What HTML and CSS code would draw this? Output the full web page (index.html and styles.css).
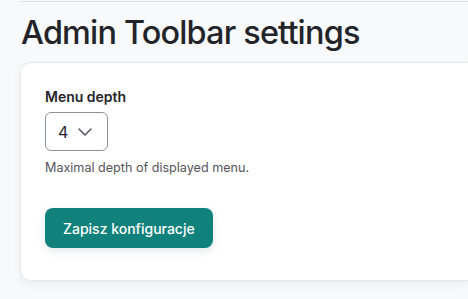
FILE: index.html
```html
<!DOCTYPE html>
<html lang="en">
<head>
<meta charset="utf-8">
<title>Admin Toolbar settings</title>
<link rel="stylesheet" href="styles.css">
</head>
<body>
<div class="page">
  <div class="rule"></div>
  <h1 class="title">Admin Toolbar settings</h1>
  <form class="card">
    <div class="field">
      <label class="label" for="depth">Menu depth</label>
      <div class="select">
        <span class="select-value">4</span>
        <svg class="chev" width="14" height="8" viewBox="0 0 14 8"><path d="M1 1l6 6 6-6" fill="none" stroke="#545560" stroke-width="1.5" stroke-linecap="round" stroke-linejoin="round"/></svg>
      </div>
      <div class="desc">Maximal depth of displayed menu.</div>
    </div>
    <div class="actions">
      <button type="button" class="btn">Zapisz konfiguracje</button>
    </div>
  </form>
</div>
</body>
</html>
```

FILE: styles.css
```css
html, body {
  margin: 0;
  padding: 0;
}
body {
  background: #f7f9fa;
  font-family: Inter, "Noto Sans", sans-serif;
  color: #232429;
  width: 468px;
  height: 299px;
  overflow: hidden;
}
.page {
  padding-left: 20px;
}
.rule {
  height: 1px;
  margin-top: 1px;
  background: #dedfe4;
}
.title {
  margin: 10px 0 0 0;
  padding-left: 1px;
  font-size: 32.4px;
  font-weight: 500;
  letter-spacing: -0.025em;
  line-height: 42px;
  color: #232429;
}
.card {
  margin-top: 8px;
  height: 219px;
  box-sizing: border-box;
  background: #fff;
  border: 1px solid #e6e7ea;
  border-right: none;
  border-radius: 10px 0 0 10px;
  box-shadow: 0 4px 10px rgba(0, 0, 0, 0.05);
  padding: 24px 24px;
}
.label {
  display: block;
  font-size: 14px;
  font-weight: 600;
  line-height: 20px;
  color: #232429;
}
.select {
  margin-top: 5px;
  width: 63px;
  height: 39px;
  box-sizing: border-box;
  border: 1px solid #8e929c;
  border-radius: 6px;
  display: flex;
  align-items: center;
  padding-left: 12px;
  gap: 10px;
}
.select-value {
  font-size: 16px;
  line-height: 20px;
  color: #232429;
}
.chev {
  display: block;
}
.desc {
  margin-top: 9px;
  font-size: 12.6px;
  line-height: 16px;
  color: #55565b;
}
.actions {
  margin-top: 32px;
}
.btn {
  height: 40px;
  padding: 0 18px;
  border: none;
  border-radius: 8px;
  background: #11817b;
  color: #fff;
  font-family: Inter, "Noto Sans", sans-serif;
  font-size: 14px;
  font-weight: 500;
  box-shadow: 0 3px 8px rgba(0, 60, 80, 0.12);
}
```
